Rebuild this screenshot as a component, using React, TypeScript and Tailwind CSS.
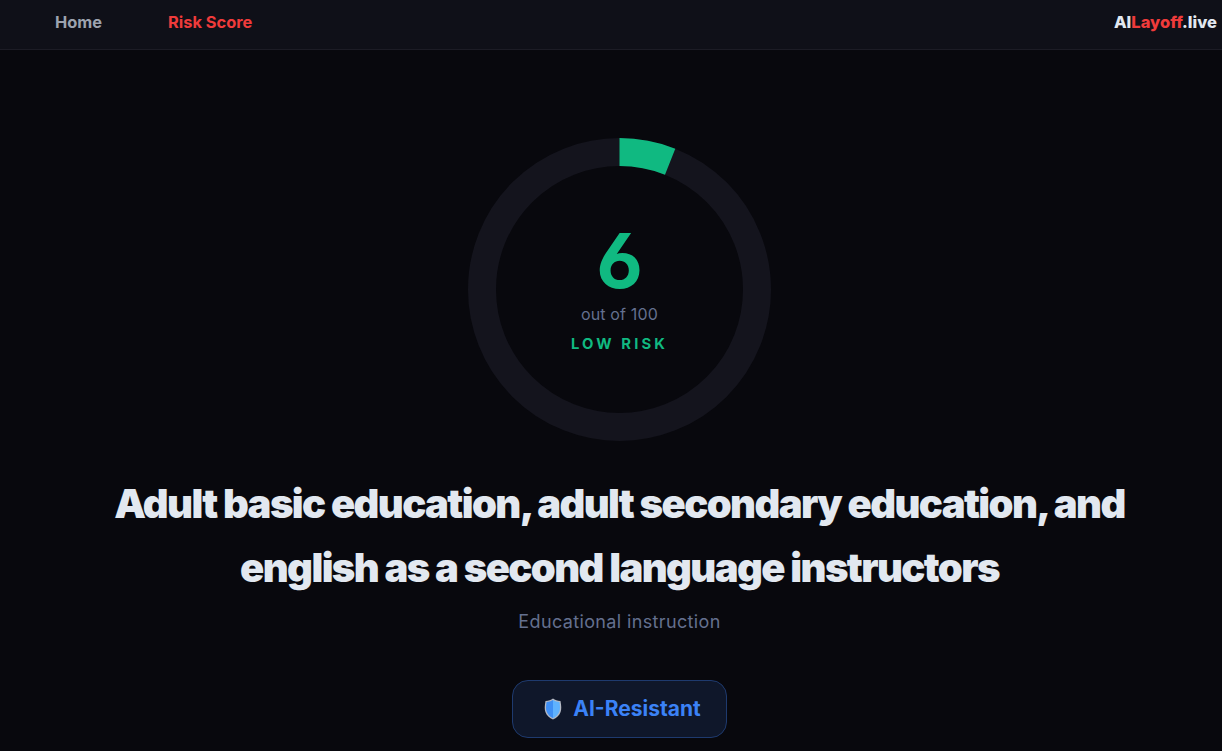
export default function App() {
  const c = 2 * Math.PI * 137.5;
  return (
    <div className="h-[751px] w-[1222px] overflow-hidden bg-[#08080d] font-['Inter',sans-serif]">
      <div className="w-[1239px]">
        <nav className="flex h-[50px] items-center justify-between border-b border-[#1c1c25] bg-[#0f1018] pb-[5px] pl-[55px] pr-[22px] text-base font-bold">
          <div className="flex items-center gap-[66px]">
            <span className="text-[16.4px] text-[#9ca3af]">Home</span>
            <span className="text-[16.4px] text-[#ef3b3b]">Risk Score</span>
          </div>
          <div className="text-[16.5px] font-extrabold text-[#e2e8f0]">
            AI<span className="text-[#ef3b3b]">Layoff</span>.live
          </div>
        </nav>
        <main className="flex flex-col items-center pt-[88px]">
          <div className="relative h-[302px] w-[303px]">
            <svg viewBox="0 0 303 303" className="h-[303px] w-[303px] -rotate-90">
              <circle cx="151.5" cy="151.5" r="137.5" fill="none" stroke="#14141d" strokeWidth="28" />
              <circle cx="151.5" cy="151.5" r="137.5" fill="none" stroke="#10b981" strokeWidth="28" strokeDasharray={`${c * 0.06} ${c}`} />
            </svg>
            <div className="absolute inset-0 flex flex-col items-center justify-center pb-[4px]">
              <div className="mb-[2px] text-[76px] font-bold leading-[80px] text-[#10b981] [font-feature-settings:'cv03','ss01']">6</div>
              <div className="text-base leading-6 tracking-[0.01em] text-[#64708f]">out of 100</div>
              <div className="mt-[8px] text-[14.8px] font-bold leading-5 tracking-[0.21em] text-[#10b981]">LOW RISK</div>
            </div>
          </div>
          <h1 className="mt-[32px] w-[1040px] text-center text-[40px] font-black leading-[64px] tracking-[-0.04em] text-[#e2e8f0]">
            Adult basic education, adult secondary education, and english as a second language instructors
          </h1>
          <div className="mt-[8px] text-lg leading-7 tracking-[0.02em] text-[#64708f]">Educational instruction</div>
          <div className="mt-[44px] flex h-[58px] w-[215px] items-center justify-center gap-[11px] rounded-2xl border border-[#1e3a6e] bg-[#0f172a] pl-[6px] text-[21px] font-bold text-[#3b82f6]">
            <svg viewBox="0 0 18 22" className="h-[22px] w-[18px]">
              <path d="M9 .5 C11 2 13.5 2.8 16.5 3 C17.4 8 17.6 11 16.6 14 C15.4 17.5 12.5 20 9 21.5 C5.5 20 2.6 17.5 1.4 14 C.4 11 .6 8 1.5 3 C4.500 2.800 7 2 9 .5 Z" fill="#b4b9c4" />
              <path d="M9 2 C7 3.300 5 3.900 2.600 4.100 C1.900 8 1.700 11 2.600 13.600 C3.700 16.600 6 18.800 9 20.200 Z" fill="#3f8ff5" />
              <path d="M9 2 C11 3.300 13 3.900 15.400 4.100 C16.100 8 16.300 11 15.400 13.600 C14.300 16.600 12 18.800 9 20.200 Z" fill="#5fb2ff" />
            </svg>
            <span>AI-Resistant</span>
          </div>
        </main>
      </div>
    </div>
  );
}
